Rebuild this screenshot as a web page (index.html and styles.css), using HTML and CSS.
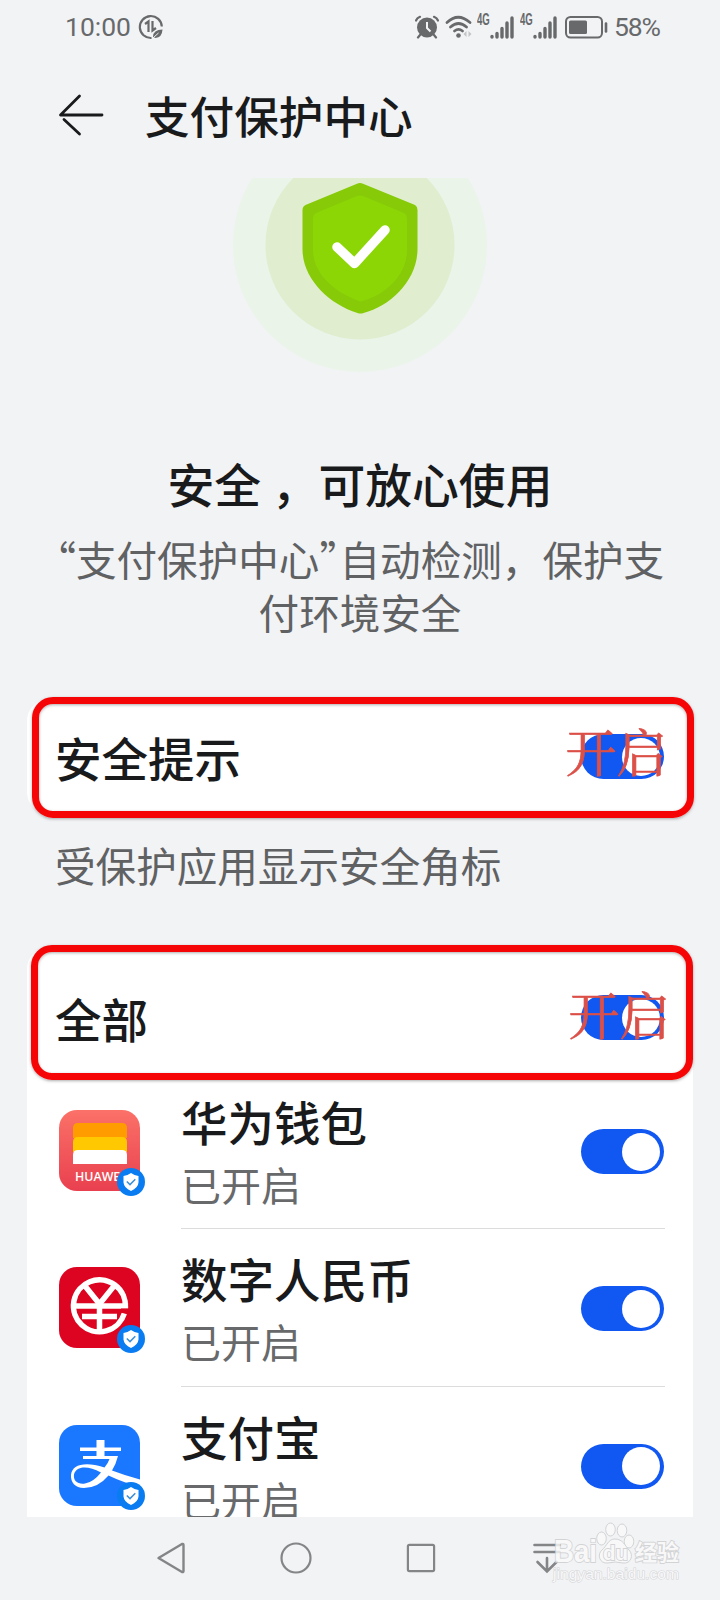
FILE: index.html
```html
<!DOCTYPE html>
<html lang="zh-CN">
<head>
<meta charset="utf-8">
<title>支付保护中心</title>
<link rel="stylesheet" href="styles.css">
</head>
<body>
<svg class="defs" width="0" height="0">
  <symbol id="badge" viewBox="0 0 28 28">
    <circle cx="14" cy="14" r="14" fill="#0a7cf2"/>
    <path d="M14 5 Q17.500 7.600 21.500 8 V14.500 Q21 20 14 23 Q7 20 6.500 14.500 V8 Q10.500 7.600 14 5Z" fill="#fff"/>
    <path d="M9.800 13.500 L13 16.600 L18.300 11.300" fill="none" stroke="#3b8fd6" stroke-width="1.500"/>
  </symbol>
</svg>
<div class="phone">
  <div class="status">
    <span class="clock">10:00</span>
    <svg class="saver" width="26" height="26" viewBox="0 0 26 26" fill="none" stroke="#67696b">
      <path d="M13.500 24 A11 11 0 1 1 23.800 12.500" stroke-width="2.200"/>
      <path d="M7 10 L10.500 7.500 V18 M14.500 7 V16.500 L18 14" stroke-width="2.200"/>
      <path d="M15 23 Q15 15.500 24.500 15.500 Q24 23.500 17.500 24 Z" fill="#67696b" stroke="none"/>
      <path d="M15 24 L20.500 19" stroke="#f2f3f5" stroke-width="1"/>
    </svg>
    <svg class="alarm" width="24" height="24" viewBox="0 0 24 24">
      <circle cx="12" cy="12.500" r="10" fill="#67696b"/>
      <path d="M1 5.500 Q2 3 5 1.800 M23 5.500 Q22 3 19 1.800 M5 20 L3 22.500 M19 20 L21 22.500" stroke="#67696b" stroke-width="2.200" fill="none" stroke-linecap="round"/>
      <path d="M12 7 V13 L15.500 16.500" stroke="#f2f3f5" stroke-width="2" fill="none"/>
    </svg>
    <svg class="wifi" width="28" height="24" viewBox="0 0 28 24" fill="none" stroke="#67696b" stroke-width="2.700" stroke-linecap="round">
      <path d="M2 7.500 Q13 -3 25 7.500 M5.500 12 Q13.500 5 21.500 12 M9.500 16 Q13.500 12.800 17.500 16"/>
      <circle cx="13.500" cy="20.500" r="2.300" fill="#67696b" stroke="none"/>
      <path d="M21.500 16 V22 L18.500 19 Z M23.500 16 V22 L26.500 19 Z" fill="#c2c4c6" stroke="none"/>
    </svg>
    <span class="net">4G</span>
    <svg class="bars" width="24" height="23" viewBox="0 0 24 23" stroke="#67696b" stroke-width="3.400" stroke-linecap="round">
      <path d="M2 20.500 V21 M7 17.500 V21 M12 12.500 V21 M17 7 V21 M22 2 V21"/>
    </svg>
    <span class="net net-second">4G</span>
    <svg class="bars" width="24" height="23" viewBox="0 0 24 23" stroke="#67696b" stroke-width="3.400" stroke-linecap="round">
      <path d="M2 20.500 V21 M7 17.500 V21 M12 12.500 V21 M17 7 V21 M22 2 V21"/>
    </svg>
    <svg class="battery" width="43" height="23" viewBox="0 0 43 23">
      <rect x="1" y="1" width="36" height="20.500" rx="4.500" fill="none" stroke="#67696b" stroke-width="2"/>
      <rect x="4" y="4.500" width="18" height="13.500" rx="1.500" fill="#67696b"/>
      <path d="M41 7.500 V15.500" stroke="#67696b" stroke-width="2.600" stroke-linecap="round"/>
    </svg>
    <span class="percent">58%</span>
  </div>

  <header class="titlebar">
    <svg width="46" height="42" viewBox="0 0 46 42" fill="none" stroke="#191a1c" stroke-width="2.800" stroke-linecap="round" stroke-linejoin="round">
      <path d="M21.500 2 L2.500 21 H44 M6 25.500 L21.500 40"/>
    </svg>
    <h1 class="title">支付保护中心</h1>
  </header>

  <svg class="hero" width="260" height="200" viewBox="0 0 260 200">
    <circle cx="130" cy="67" r="127" fill="#eaf4e9"/>
    <circle cx="130" cy="67" r="94.500" fill="#e0edcf"/>
    <path d="M127 5.800 Q130 4.200 133 5.800 L185 27 Q187.500 28.500 187.500 32 V71 C187.500 102 161 128 133.500 135 Q130.500 136 127.500 135 C99 126 72.500 101 72.500 71 V32 Q72.500 28.500 75.500 27 Z" fill="#86ca08"/>
    <path d="M127 18 Q130 17 133 18 L174 35 Q177 37 177 40 V72 C177 97 156 117 130.500 123.500 C105 115 83 96 83 72 V40 Q83 37 86 35 Z" fill="#8dd606"/>
    <path d="M107 69 L124.500 85.500 L155 52" fill="none" stroke="#fff" stroke-width="9.500" stroke-linecap="round" stroke-linejoin="round"/>
  </svg>
  <h2 class="headline">安全 ，可放心使用</h2>
  <p class="desc"><span class="open-quote">“</span>支付保护中心<span class="close-quote">”</span>自动检测，保护支<br>付环境安全</p>

  <section class="card tips">
    <span class="label">安全提示</span>
    <span class="switch"><em class="note">开启</em></span>
    <i class="frame"></i>
  </section>
  <p class="caption">受保护应用显示安全角标</p>

  <section class="card apps">
    <div class="all">
      <span class="label">全部</span>
      <span class="switch"><em class="note note-all">开启</em></span>
      <i class="frame frame-all"></i>
    </div>
    <div class="row">
      <div class="icon">
        <svg width="81" height="81" viewBox="0 0 81 81">
          <defs><linearGradient id="wallet" x1="0" y1="0" x2="0" y2="1"><stop offset="0" stop-color="#fb7168"/><stop offset="1" stop-color="#e9404f"/></linearGradient></defs>
          <rect width="81" height="81" rx="18" fill="url(#wallet)"/>
          <path d="M14 28 V18 Q14 13 19 13 H63 Q68 13 68 18 V28Z" fill="#ff9c00"/>
          <path d="M14 42 V32 Q14 27 19 27 H63 Q68 27 68 32 V42Z" fill="#ffc800"/>
          <path d="M14 54 V45 Q14 40 19 40 H63 Q68 40 68 45 V54Z" fill="#fff"/>
          <text x="16" y="70.500" class="brand" textLength="49" lengthAdjust="spacingAndGlyphs">HUAWEI</text>
        </svg>
        <svg class="badge"><use href="#badge"/></svg>
      </div>
      <div class="body">
        <div class="names"><div class="label">华为钱包</div><div class="state">已开启</div></div>
        <span class="switch"></span>
      </div>
    </div>
    <div class="row">
      <div class="icon">
        <svg width="81" height="81" viewBox="0 0 81 81">
          <rect width="81" height="81" rx="18" fill="#dc0420"/>
          <g fill="none" stroke="#fff" stroke-width="5.500">
            <path d="M66.400 40.500 A26 26 0 1 0 65.300 46.500"/>
            <path d="M16 39 H69.100"/>
            <path d="M62 43.500 H70" stroke="#dc0420" stroke-width="4"/>
            <path d="M26 19 L40.500 37 L55 19 M40.500 36 V66 M23 49.500 H58"/>
          </g>
        </svg>
        <svg class="badge"><use href="#badge"/></svg>
      </div>
      <div class="body">
        <div class="names"><div class="label">数字人民币</div><div class="state">已开启</div></div>
        <span class="switch"></span>
      </div>
    </div>
    <div class="row">
      <div class="icon">
        <svg width="81" height="81" viewBox="0 0 81 81">
          <rect width="81" height="81" rx="18" fill="#1a77ff"/>
          <path d="M37.500 15 H45.500 V22.500 H62 V26 H45.500 V31 H59 Q57 39 53 45.500 Q66 50.500 81 54.500 V62 Q63 57 49.500 50.500 Q39 63 25 63 C16 63 11.500 57 12 50 C13 40 25 36 45.500 42.500 Q49 38.500 50.500 34 H24 V31 H37.500 V26 H21 V22.500 H37.500 Z M42 47.500 C28 40 17 41.500 15 49.500 C14 56 19 59.500 26 58.500 Q34 57.500 42 47.500Z" fill="#fff" fill-rule="evenodd"/>
        </svg>
        <svg class="badge"><use href="#badge"/></svg>
      </div>
      <div class="body">
        <div class="names"><div class="label">支付宝</div><div class="state">已开启</div></div>
        <span class="switch"></span>
      </div>
    </div>
  </section>

  <nav class="nav">
    <svg width="30" height="34" viewBox="0 0 30 34"><path d="M2.500 17 L26 3 Q27.500 2.500 27.500 4 V30 Q27.500 31.500 26 31 Z" fill="none" stroke="#838587" stroke-width="2.400" stroke-linejoin="round"/></svg>
    <svg width="34" height="34" viewBox="0 0 34 34"><circle cx="17" cy="17" r="14.500" fill="none" stroke="#838587" stroke-width="2.200"/></svg>
    <svg width="30" height="30" viewBox="0 0 30 30"><rect x="1.900" y="1.900" width="26.200" height="26.200" rx="1.500" fill="none" stroke="#838587" stroke-width="2.200"/></svg>
    <svg width="30" height="32" viewBox="0 0 30 32"><path d="M2.500 3 H27.500 M2.500 10 H27.500 M15 16 V29 M5.500 20 L15 29.500 L24.500 20" fill="none" stroke="#838587" stroke-width="2.600" stroke-linecap="round"/></svg>
  </nav>
  <svg class="watermark" width="136" height="64" viewBox="0 0 136 64">
    <g fill="#fafafa" stroke="#cbccce" stroke-width="1.800">
      <text x="2" y="40" class="wm-name" textLength="43" lengthAdjust="spacingAndGlyphs">Bai</text>
      <g stroke-width="1">
        <ellipse cx="49.500" cy="16.500" rx="4.800" ry="6.500"/><ellipse cx="58.500" cy="7.500" rx="4.800" ry="6.500"/>
        <ellipse cx="70" cy="8.500" rx="4.800" ry="6.500"/><ellipse cx="77" cy="19.500" rx="4.800" ry="6.500"/>
        <path d="M63 17 C71 17 73 24 77 28 C82 33 79 42 71 41 Q63 39 56 41 C47 42 45 32 50 28 C55 24 56 17 63 17Z"/>
      </g>
      <text x="51" y="38" class="wm-du" textLength="25" lengthAdjust="spacingAndGlyphs">du</text>
      <text x="83" y="38" class="wm-exp">经验</text>
      <text x="1" y="57" class="wm-url" textLength="126" lengthAdjust="spacingAndGlyphs">jingyan.baidu.com</text>
    </g>
  </svg>
</div>
</body>
</html>
```
FILE: styles.css
```css
* { box-sizing: border-box; }
body, h1, h2, p { margin: 0; }
body {
  background: #f2f3f5;
  color: #191a1c;
  font-family: "Noto Sans CJK SC", "Liberation Sans", sans-serif;
}
.defs { position: absolute; }
.phone {
  position: relative;
  width: 720px;
  height: 1600px;
  overflow: hidden;
  display: flex;
  flex-direction: column;
}

.status {
  height: 54px;
  padding: 0 60px 0 65px;
  display: flex;
  align-items: center;
  color: #67696b;
  font-family: Roboto, sans-serif;
  font-size: 26.500px;
  line-height: 56px;
  white-space: nowrap;
}
.clock { width: 73px; flex: none; }
.saver { margin-right: 251px; }
.alarm { margin-right: 6px; }
.wifi { margin-right: 4px; }
.net { font: 700 16px/16px "Liberation Sans", sans-serif; width: 13px; flex: none; transform: scaleX(.6); transform-origin: left; margin-top: -14px; }
.net-second { margin-left: 6px; }
.battery { margin: 0 6px 0 8px; }
.status svg { flex: none; }
.percent { letter-spacing: -1.200px; }

.titlebar {
  height: 121px;
  padding-left: 58px;
  display: flex;
  align-items: center;
  gap: 41px;
}
.title { font-size: 44.600px; font-weight: 500; line-height: 60px; }

.hero { display: block; margin: 3px auto 0; }
.headline {
  margin-top: 75px;
  font-size: 46.800px;
  font-weight: 500;
  line-height: 60px;
  text-align: center;
}
.desc {
  margin-top: 19px;
  font-size: 40.6px;
  line-height: 53px;
  color: #606163;
  text-align: center;
  white-space: nowrap;
}
.open-quote { margin-left: -20.500px; }
.close-quote { letter-spacing: -20.500px; }

.card {
  margin: 0 27px;
  background: #fff;
}
.label { font-size: 46.500px; font-weight: 500; line-height: 60px; white-space: nowrap; }
.tips {
  position: relative;
  margin-top: 61px;
  height: 115px;
  flex: none;
  padding: 0 29.500px 0 28px;
  border-radius: 22px;
  display: flex;
  align-items: center;
  justify-content: space-between;
}
.frame {
  position: absolute;
  left: 5px;
  right: -1px;
  top: -2px;
  height: 121px;
  border: 7px solid #f50505;
  border-radius: 21px;
  box-shadow: 0 1px 3px #6668, inset 0 1px 3px #6668;
}
.switch {
  position: relative;
  flex: none;
  width: 83px;
  height: 45px;
  border-radius: 23px;
  background: #1157f2;
}
.switch::before {
  content: "";
  position: absolute;
  right: 3.500px;
  top: 3.500px;
  width: 38px;
  height: 38px;
  border-radius: 50%;
  background: #fff;
}
.note {
  position: absolute;
  left: -15px;
  top: -14px;
  color: #db5048;
  font: 400 51px/60px "Noto Serif CJK SC", "Noto Sans CJK SC", serif;
  -webkit-text-stroke: .7px #db5048;
  white-space: nowrap;
}
.note-all { left: -12px; top: -12px; }

.caption {
  margin: 26px 0 0 55px;
  font-size: 40.6px;
  line-height: 50px;
  color: #606163;
}

.apps {
  margin-top: 57px;
  height: 570px;
  flex: none;
  padding-top: 16px;
  border-radius: 22px 22px 0 0;
}
.all {
  position: relative;
  height: 109px;
  padding: 0 29.500px 0 28px;
  display: flex;
  align-items: center;
  justify-content: space-between;
}
.frame-all { left: 4px; right: 0; top: -18px; height: 135px; }
.row {
  height: 157.300px;
  padding: 0 28px 0 32px;
  display: flex;
}
.row:last-child { height: 130.400px; overflow: hidden; }
.icon { position: relative; width: 81px; height: 81px; margin: 38px 41px 0 0; flex: none; }
.badge { position: absolute; left: 57.500px; top: 57.500px; width: 28px; height: 28px; }
.brand { fill: #fff; font: 600 12px "Open Sans", sans-serif; }
.body {
  flex: 1;
  height: 157.300px;
  border-bottom: 1px solid #dcdcdd;
  display: flex;
  justify-content: space-between;
}
.body .switch { margin: 57px 1.500px 0 0; }
.names { padding-top: 19px; }
.state { margin-top: 2px; font-size: 40px; line-height: 62px; color: #68696a; }

.nav {
  height: 82px;
  padding-left: 156px;
  display: flex;
  align-items: center;
}
.nav svg { margin-right: 93px; flex: none; }
.nav svg:nth-child(3) { margin-right: 96px; }

.watermark { position: absolute; left: 552px; top: 1522px; overflow: visible; opacity: .8; }
.watermark text { paint-order: stroke; }
.wm-name { font: 700 31px "Liberation Sans", sans-serif; }
.wm-du { font: 700 21px "Liberation Sans", sans-serif; }
.wm-exp { font: 700 22px "Noto Sans CJK SC", sans-serif; }
.wm-url { font: 400 15px "Liberation Sans", sans-serif; stroke-width: 1px; }
```
